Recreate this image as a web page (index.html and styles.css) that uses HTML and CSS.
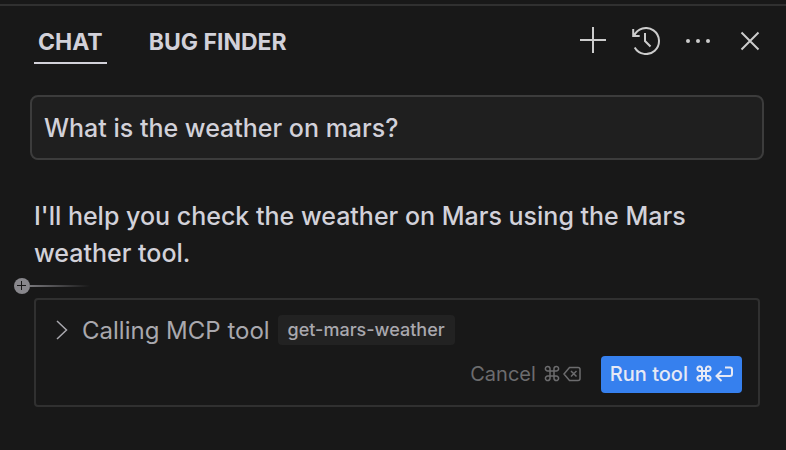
FILE: index.html
```html
<!DOCTYPE html>
<html lang="en">
<head>
<meta charset="utf-8">
<title>Chat</title>
<link rel="stylesheet" href="styles.css">
</head>
<body>
<div class="panel">
  <header class="header">
    <nav class="tabs">
      <button class="tab tab-active" type="button">CHAT</button>
      <button class="tab" type="button">BUG FINDER</button>
    </nav>
    <div class="actions">
      <button class="icon-button" type="button" aria-label="New chat">
        <svg width="28" height="28" viewBox="0 0 28 28"><path d="M13 0v26M0 13h26"/></svg>
      </button>
      <button class="icon-button" type="button" aria-label="History">
        <svg width="28" height="28" viewBox="0 0 28 28"><path d="M2 9A13 13 0 1 1 2.700 20.500M1.200 2v7h6.500M13 6v8l5.500 5.500"/></svg>
      </button>
      <button class="icon-button" type="button" aria-label="More">
        <svg class="dots" width="28" height="28" viewBox="0 0 28 28"><circle cx="4" cy="14" r="2"/><circle cx="14" cy="14" r="2"/><circle cx="24" cy="14" r="2"/></svg>
      </button>
      <button class="icon-button" type="button" aria-label="Close">
        <svg width="28" height="28" viewBox="0 0 28 28"><path d="M5.500 5.500l17 17M22.500 5.500l-17 17"/></svg>
      </button>
    </div>
  </header>
  <main class="conversation">
    <input class="prompt" type="text" aria-label="Message" value="What is the weather on mars?">
    <p class="reply">I'll help you check the weather on Mars using the Mars weather tool.</p>
    <div class="marker">
      <svg width="16" height="16" viewBox="0 0 16 16"><circle cx="8" cy="8" r="8"/><path d="M7.500 3v9M3 7.500h9"/></svg>
      <span class="marker-line"></span>
    </div>
    <section class="card">
      <div class="call">
        <svg class="chevron" width="12" height="20" viewBox="0 0 12 20"><path d="M1 1l9.500 9L1 19"/></svg>
        <span class="call-label">Calling MCP tool</span>
        <code class="tool-name">get-mars-weather</code>
      </div>
      <div class="card-actions">
        <button class="cancel" type="button">
          Cancel
          <svg class="keys" width="37" height="18" viewBox="0 0 37 18" role="img" aria-label="Command Backspace">
            <path d="M6 6V3.800A2.300 2.300 0 1 0 3.700 6H12.300A2.300 2.300 0 1 0 10 3.800V13.200A2.300 2.300 0 1 0 12.300 11H3.700A2.300 2.300 0 1 0 6 13.200Z"/>
            <path d="M25.500 2.500H34Q36 2.500 36 4.500V13.500Q36 15.500 34 15.500H25.500L20 9ZM27 6l5.500 5.500M32.500 6l-5.500 5.500"/>
          </svg>
        </button>
        <button class="run" type="button">
          Run tool
          <svg class="keys" width="37" height="18" viewBox="0 0 37 18" role="img" aria-label="Command Return">
            <path d="M6 6V3.800A2.300 2.300 0 1 0 3.700 6H12.300A2.300 2.300 0 1 0 10 3.800V13.200A2.300 2.300 0 1 0 12.300 11H3.700A2.300 2.300 0 1 0 6 13.200Z"/>
            <path d="M29 2.500H34Q36 2.500 36 4.500V9Q36 11 34 11H21M25.500 6L20.500 11l5 5"/>
          </svg>
        </button>
      </div>
    </section>
  </main>
</div>
</body>
</html>
```

FILE: styles.css
```css
* {
  box-sizing: border-box;
}

body {
  margin: 0;
  background: #181818;
  color: #d2d1d9;
  font-family: Inter, "DejaVu Sans", sans-serif;
}

button,
input {
  margin: 0;
  font-family: inherit;
  color: inherit;
}

button {
  border: 0;
  padding: 0;
  background: none;
  white-space: nowrap;
}

.panel {
  margin-top: 4px;
  border-top: 2px solid #303030;
}

.header {
  display: flex;
  justify-content: space-between;
  align-items: flex-start;
  padding: 14px 22px 0 34px;
}

.tabs {
  display: flex;
  gap: 38px;
}

.tab {
  height: 44px;
  padding: 1px 4px 0;
  border-bottom: 2px solid transparent;
  font-size: 23px;
  font-weight: 700;
}

.tab-active {
  border-bottom-color: #d2d1d9;
}

.actions {
  display: flex;
  gap: 24px;
  padding-top: 7px;
}

.icon-button svg {
  display: block;
  fill: none;
  stroke: #cccccc;
  stroke-width: 2;
}

.icon-button .dots {
  fill: #cccccc;
  stroke: none;
}

.conversation {
  padding: 31px 26px 0 34px;
}

.prompt {
  display: block;
  width: calc(100% + 8px);
  height: 65px;
  margin: 0 -4px;
  padding: 0 12px;
  border: 2px solid #3c3c3c;
  border-radius: 8px;
  background: #1f1f1f;
  font-size: 25px;
  font-weight: 500;
}

.reply {
  margin: 38px 0 6px;
  font-size: 25px;
  font-weight: 500;
  line-height: 37px;
}

.marker {
  display: flex;
  align-items: center;
  margin: 0 0 4px -20px;
}

.marker svg {
  fill: #88878c;
  stroke: #181818;
}

.marker circle {
  stroke: none;
}

.marker-line {
  width: 60px;
  height: 2px;
  background: linear-gradient(to right, #77767a, transparent);
}

.card {
  padding: 12px 16px 12px 20px;
  border: 2px solid #303030;
  border-radius: 4px;
}

.call {
  display: flex;
  align-items: center;
  height: 36px;
  color: #a9a8ae;
}

.chevron {
  margin-right: 14px;
  fill: none;
  stroke: #a9a8ae;
  stroke-width: 1.5;
}

.call-label {
  margin-right: 8px;
  font-size: 24px;
}

.tool-name {
  padding: 0 10px;
  border-radius: 4px;
  background: #222222;
  font-family: inherit;
  font-size: 18px;
  font-weight: 500;
  line-height: 30px;
}

.card-actions {
  display: flex;
  justify-content: flex-end;
  gap: 20px;
  margin-top: 8px;
}

.cancel,
.run {
  display: flex;
  align-items: center;
  gap: 8px;
  height: 37px;
  padding-bottom: 2px;
  font-size: 20px;
}

.keys {
  fill: none;
  stroke: currentColor;
  stroke-width: 2;
}

.cancel {
  color: #6c6c6e;
}

.cancel .keys {
  stroke-width: 1.5;
}

.run {
  padding: 0 9px 2px;
  border-radius: 4px;
  background: #3680ee;
  color: #e6e9f5;
  font-weight: 500;
}
```
